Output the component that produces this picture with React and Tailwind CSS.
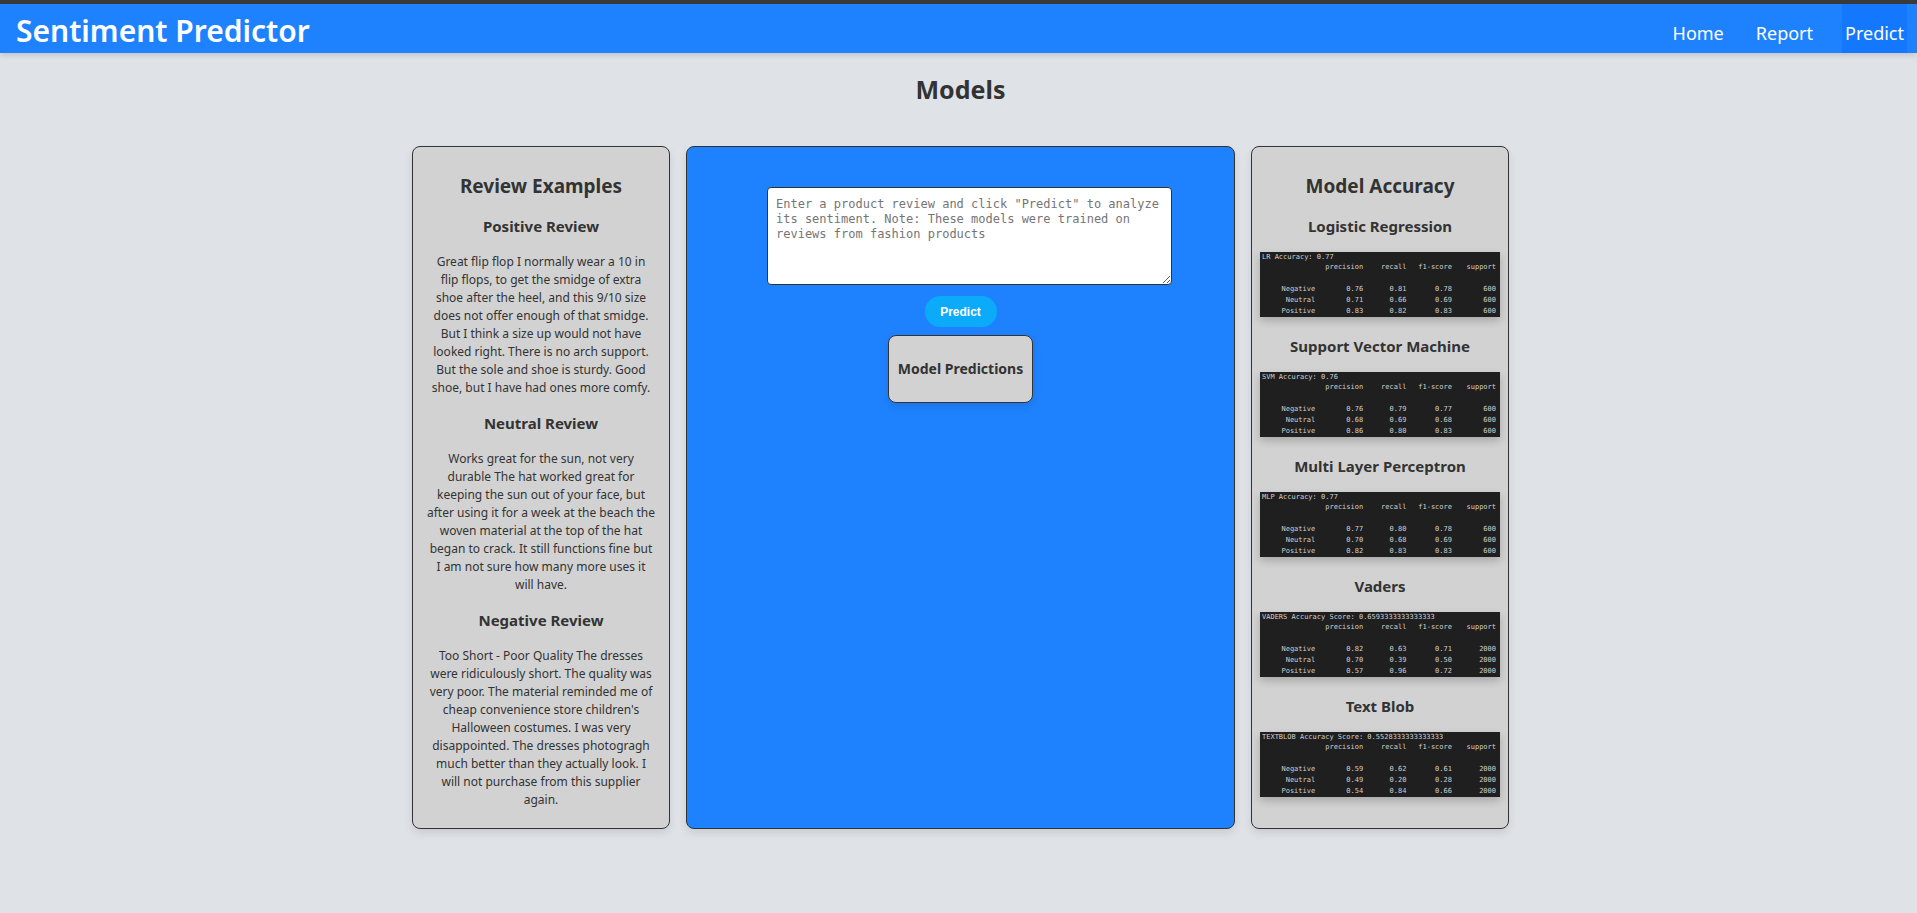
const reviews = [
  {
    title: "Positive Review",
    lines: [
      "Great flip flop I normally wear a 10 in",
      "flip flops, to get the smidge of extra",
      "shoe after the heel, and this 9/10 size",
      "does not offer enough of that smidge.",
      "But I think a size up would not have",
      "looked right. There is no arch support.",
      "But the sole and shoe is sturdy. Good",
      "shoe, but I have had ones more comfy.",
    ],
  },
  {
    title: "Neutral Review",
    lines: [
      "Works great for the sun, not very",
      "durable The hat worked great for",
      "keeping the sun out of your face, but",
      "after using it for a week at the beach the",
      "woven material at the top of the hat",
      "began to crack. It still functions fine but",
      "I am not sure how many more uses it",
      "will have.",
    ],
  },
  {
    title: "Negative Review",
    lines: [
      "Too Short - Poor Quality The dresses",
      "were ridiculously short. The quality was",
      "very poor. The material reminded me of",
      "cheap convenience store children's",
      "Halloween costumes. I was very",
      "disappointed. The dresses photogragh",
      "much better than they actually look. I",
      "will not purchase from this supplier",
      "again.",
    ],
  },
];

const models = [
  {
    title: "Logistic Regression",
    caption: "LR Accuracy: 0.77",
    rows: [
      ["Negative", "0.76", "0.81", "0.78", "600"],
      ["Neutral", "0.71", "0.66", "0.69", "600"],
      ["Positive", "0.83", "0.82", "0.83", "600"],
    ],
  },
  {
    title: "Support Vector Machine",
    caption: "SVM Accuracy: 0.76",
    rows: [
      ["Negative", "0.76", "0.79", "0.77", "600"],
      ["Neutral", "0.68", "0.69", "0.68", "600"],
      ["Positive", "0.86", "0.80", "0.83", "600"],
    ],
  },
  {
    title: "Multi Layer Perceptron",
    caption: "MLP Accuracy: 0.77",
    rows: [
      ["Negative", "0.77", "0.80", "0.78", "600"],
      ["Neutral", "0.70", "0.68", "0.69", "600"],
      ["Positive", "0.82", "0.83", "0.83", "600"],
    ],
  },
  {
    title: "Vaders",
    caption: "VADERS Accuracy Score: 0.6593333333333333",
    rows: [
      ["Negative", "0.82", "0.63", "0.71", "2000"],
      ["Neutral", "0.70", "0.39", "0.50", "2000"],
      ["Positive", "0.57", "0.96", "0.72", "2000"],
    ],
  },
  {
    title: "Text Blob",
    caption: "TEXTBLOB Accuracy Score: 0.5528333333333333",
    rows: [
      ["Negative", "0.59", "0.62", "0.61", "2000"],
      ["Neutral", "0.49", "0.20", "0.28", "2000"],
      ["Positive", "0.54", "0.84", "0.66", "2000"],
    ],
  },
];

const links = ["Home", "Report", "Predict"];

function Header() {
  return (
    <header className="flex items-stretch justify-between border-t-4 border-[#3a3a3a] bg-[#1e82ff] pr-[10px] pl-4 text-white shadow-[0_2px_6px_rgba(0,0,0,0.15)]">
      <h1 className="pt-1.5 pb-px text-[30px] leading-[42px] font-semibold">Sentiment Predictor</h1>
      <nav className="flex gap-[26px]">
        {links.map((name) => (
          <a
            key={name}
            href={"#" + name.toLowerCase()}
            aria-current={name === "Predict" ? "page" : undefined}
            className="flex items-end px-[3px] pb-2 text-lg leading-6 aria-[current=page]:bg-[#1478ff]"
          >
            {name}
          </a>
        ))}
      </nav>
    </header>
  );
}

function Card({ title, children }) {
  return (
    <section className="rounded-lg border border-[#333] bg-[#d2d2d2] px-2 pt-6 pb-[19px] text-center shadow-[0_4px_8px_rgba(0,0,0,0.1)]">
      <h2 className="mb-[15px] text-[19px] leading-[30px] font-bold">{title}</h2>
      {children}
    </section>
  );
}

function Report({ title, caption, rows }) {
  return (
    <div className="mb-[19px] last:mb-0">
      <h3 className="mb-4 text-[15px] leading-5 font-bold">{title}</h3>
      <div className="h-[65px] overflow-hidden bg-[#1f1f1f] shadow-[0_4px_8px_rgba(0,0,0,0.2)]">
        <table className="w-full table-fixed text-right font-['DejaVu_Sans_Mono',monospace] text-[7px] leading-[11px] text-[#cfcfcf]">
          <caption className="h-[10px] pl-[2px] text-left leading-[10px] whitespace-nowrap">{caption}</caption>
          <thead>
            <tr>
              <td className="w-[23%] p-0" />
              <th scope="col" className="w-[20%] p-0 font-normal">precision</th>
              <th scope="col" className="w-[18%] p-0 font-normal">recall</th>
              <th scope="col" className="w-[19%] p-0 font-normal">f1-score</th>
              <th scope="col" className="p-0 pr-1 font-normal">support</th>
            </tr>
          </thead>
          <tbody className="before:block before:h-[11px]">
            {rows.map(([label, ...cells]) => (
              <tr key={label}>
                <th scope="row" className="p-0 font-normal">{label}</th>
                {cells.map((cell, i) => (
                  <td key={i} className="p-0 last:pr-1">{cell}</td>
                ))}
              </tr>
            ))}
          </tbody>
        </table>
      </div>
    </div>
  );
}

export default function App() {
  return (
    <div className="min-h-screen bg-[#dfe3e8] font-['Noto_Sans','Open_Sans',sans-serif] text-[#333]">
      <Header />
      <main className="pt-5 pb-8 pl-1">
        <h2 className="text-center text-[25px] leading-8 font-bold">Models</h2>
        <div className="mx-auto mt-[41px] grid w-full max-w-[1097px] grid-cols-[258fr_549fr_258fr] gap-4">
          <Card title="Review Examples">
            {reviews.map((review) => (
              <article key={review.title} className="mb-4 last:mb-0">
                <h3 className="mb-[17px] text-[15px] leading-5 font-bold">{review.title}</h3>
                <p className="text-xs leading-[18px] whitespace-pre-line">{review.lines.join("\n")}</p>
              </article>
            ))}
          </Card>

          <section className="flex flex-col items-center rounded-lg border border-[#333] bg-[#1e82ff] px-2 pt-10 shadow-[0_4px_8px_rgba(0,0,0,0.1)]">
            <form className="flex w-full flex-col items-center" onSubmit={(e) => e.preventDefault()}>
              <textarea
                aria-label="Product review"
                placeholder={'Enter a product review and click "Predict" to analyze its sentiment. Note: These models were trained on reviews from fashion products'}
                className="ml-[18px] block h-[98px] w-[405px] max-w-full rounded-sm border border-[#333] bg-white p-2 pt-[9px] font-['DejaVu_Sans_Mono',monospace] text-xs leading-[15px] placeholder:text-[#757575]"
              />
              <button
                type="submit"
                className="mt-[11px] h-[31px] w-[72px] rounded-full bg-[#0cabfa] font-['Liberation_Sans',sans-serif] text-xs leading-5 font-bold text-white"
              >
                Predict
              </button>
            </form>
            <div className="mt-2 rounded-lg border border-[#333] bg-[#d2d2d2] px-[9px] py-[23px] shadow-[0_4px_8px_rgba(0,0,0,0.1)]">
              <h3 className="text-[14px] leading-5 font-bold">Model Predictions</h3>
            </div>
          </section>

          <Card title="Model Accuracy">
            {models.map((model) => (
              <Report key={model.title} {...model} />
            ))}
          </Card>
        </div>
      </main>
    </div>
  );
}
